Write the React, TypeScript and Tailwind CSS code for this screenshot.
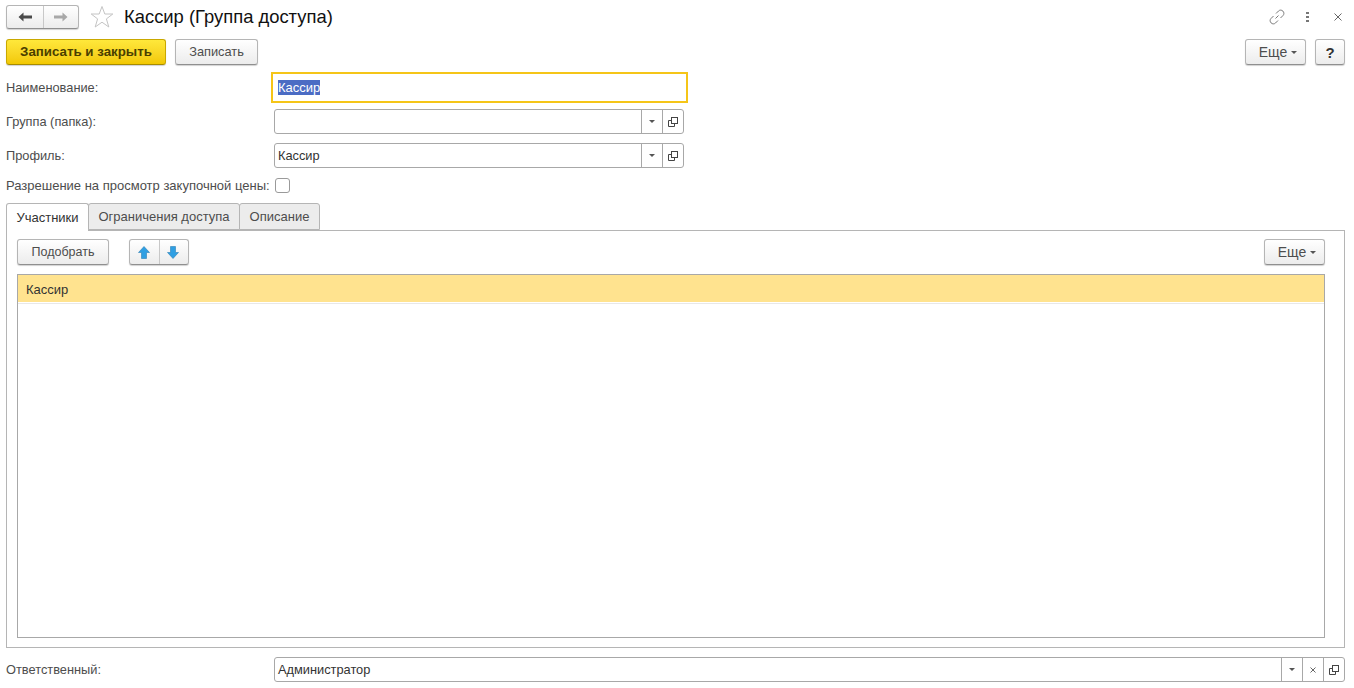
const btn = "box-border flex items-center justify-center rounded-[3px] border border-[#b5b5b5] border-b-[#8f8f8f] bg-gradient-to-b from-white to-[#ececec] text-[#4d4d4d] shadow-[0_1px_1px_rgba(0,0,0,0.18)]";

function Caret() {
  return <svg width="6" height="3" viewBox="0 0 6 3"><path d="M0 0h6L3 3z" fill="#555" /></svg>;
}

function OpenIcon() {
  return (
    <svg width="10" height="10" viewBox="0 0 10 10" fill="none" stroke="#444" strokeWidth="1">
      <rect x="3.5" y="0.5" width="6" height="6" />
      <path d="M3 3.5H0.5V9.5H6.5V7" />
    </svg>
  );
}

function Cell({ children, w = "w-[21px]" }: { children: React.ReactNode; w?: string }) {
  return <div className={`flex h-full ${w} shrink-0 items-center justify-center border-l border-[#a8a8a8]`}>{children}</div>;
}

function Field({ label, value, clear, wide }: { label: string; value?: string; clear?: boolean; wide?: boolean }) {
  return (
    <div className="flex h-[25px] items-center">
      <div className="w-[268px] shrink-0 pt-[1px] text-[#4d4d4d]">{label}</div>
      <div className={`box-border flex h-full ${wide ? "flex-1" : "w-[410px]"} items-center rounded-[3px] border border-[#a8a8a8] bg-white`}>
        <div className="flex-1 pl-[3px] pt-[1px] text-[#333]">{value}</div>
        <Cell><Caret /></Cell>
        {clear && (
          <Cell>
            <svg width="6" height="6" viewBox="0 0 6 6" stroke="#666" strokeWidth="1"><path d="M0.5 0.5L5.5 5.5M5.5 0.5L0.5 5.5" /></svg>
          </Cell>
        )}
        <Cell><OpenIcon /></Cell>
      </div>
    </div>
  );
}

function Arrow({ up }: { up?: boolean }) {
  return (
    <svg width="12" height="13" viewBox="0 0 12 13">
      <path d={up ? "M6 0.5L11.5 6.5H8.5V12.5H3.5V6.5H0.5Z" : "M6 12.5L11.5 6.5H8.5V0.5H3.5V6.5H0.5Z"} fill="#2f9fe3" stroke="#2c7fb5" strokeWidth="0.6" />
    </svg>
  );
}

function More() {
  return (
    <div className={`${btn} h-[26px] w-[61px] gap-[4px] pl-[5px]`}>
      <span className="text-[14px]">Еще</span>
      <Caret />
    </div>
  );
}

export default function App() {
  return (
    <div className="box-border flex h-[688px] w-[1354px] flex-col overflow-hidden bg-white pl-[6px] pr-[9px] pt-[5px] font-['Liberation_Sans',sans-serif] text-[12.8px] leading-none">
      {/* title bar */}
      <div className="flex h-[24px] items-center">
        <div className={`${btn} h-[24px] w-[73px]`}>
          <div className="flex h-full w-[37px] items-center justify-center border-r border-[#c8c8c8]">
            <svg width="14" height="10" viewBox="0 0 14 10"><path d="M5.5 0.5L0.5 5L5.5 9.5V6.5H14V3.5H5.5Z" fill="#4a4a4a" /></svg>
          </div>
          <div className="flex h-full flex-1 items-center justify-center">
            <svg width="14" height="10" viewBox="0 0 14 10"><path d="M8.5 0.5L13.5 5L8.5 9.5V6.5H0V3.5H8.5Z" fill="#a8a8a8" /></svg>
          </div>
        </div>
        <svg className="ml-[11px]" width="24" height="24" viewBox="0 0 24 24" fill="none" stroke="#c4c4c4" strokeWidth="1">
          <path d="M12 1.5L14.8 9H22.8L16.4 13.9L18.8 22L12 17.2L5.2 22L7.6 13.9L1.2 9H9.2Z" />
        </svg>
        <div className="ml-[10px] text-[18.4px] text-[#111]">Кассир (Группа доступа)</div>
        <div className="ml-auto flex items-center">
          <svg width="16" height="16" viewBox="0 0 16 16" fill="none" stroke="#7a7a7a" strokeWidth="1">
            <path d="M6.5 9.5L9.5 6.5M7 4.5L9.5 2C10.7 0.8 12.6 0.8 13.9 2.1C15.2 3.4 15.2 5.3 14 6.5L11.5 9M9 11.5L6.5 14C5.3 15.2 3.4 15.2 2.1 13.9C0.8 12.6 0.8 10.7 2 9.5L4.5 7" />
          </svg>
          <div className="ml-[21px] flex flex-col gap-[2px]">
            <div className="h-[2px] w-[3px] bg-[#777]" />
            <div className="h-[2px] w-[3px] bg-[#777]" />
            <div className="h-[2px] w-[3px] bg-[#777]" />
          </div>
          <svg className="ml-[25px] mr-[3px]" width="8" height="8" viewBox="0 0 8 8" stroke="#666" strokeWidth="1"><path d="M0.5 0.5L7.5 7.5M7.5 0.5L0.5 7.5" /></svg>
        </div>
      </div>

      {/* command bar */}
      <div className="mt-[10px] flex items-center">
        <div className="box-border flex h-[26px] w-[160px] items-center justify-center rounded-[3px] border border-[#c9a800] border-b-[#a88c00] bg-gradient-to-b from-[#ffe83a] to-[#f2c800] text-[13.3px] font-bold text-[#4a3f00] shadow-[0_1px_1px_rgba(0,0,0,0.18)]">Записать и закрыть</div>
        <div className={`${btn} ml-[9px] h-[26px] w-[83px]`}>Записать</div>
        <div className="ml-auto flex items-center gap-[9px]">
          <More />
          <div className={`${btn} h-[26px] w-[30px] text-[15px] font-bold text-[#333]`}>?</div>
        </div>
      </div>

      {/* name */}
      <div className="mt-[7px] flex h-[31px] items-center">
        <div className="w-[265px] shrink-0 pt-[1px] text-[#4d4d4d]">Наименование:</div>
        <div className="box-border flex h-full w-[417px] items-center border-[2px] border-[#f5c518] pl-[5px]">
          <span className="bg-[#4b6cc4] py-[1px] text-[13px] text-white">Кассир</span>
        </div>
      </div>

      <div className="flex flex-col gap-[9px] pt-[6px]">
        <Field label="Группа (папка):" />
        <Field label="Профиль:" value="Кассир" />
      </div>

      {/* checkbox */}
      <div className="mt-[10px] flex h-[15px] items-center">
        <div className="w-[269px] shrink-0 text-[13px] text-[#4d4d4d]">Разрешение на просмотр закупочной цены:</div>
        <div className="box-border h-[15px] w-[15px] rounded-[3px] border border-[#9a9a9a] bg-white" />
      </div>

      {/* tabs */}
      <div className="relative z-10 mt-[10px] flex h-[28px] items-stretch text-[13px]">
        <div className="box-border flex w-[83px] items-center justify-center rounded-t-[3px] border border-b-0 border-[#b5b5b5] bg-white pb-[1px] text-[#333]">Участники</div>
        <div className="ml-[-1px] box-border flex h-[27px] w-[152px] items-center justify-center rounded-t-[3px] border border-[#b5b5b5] bg-[#ececec] pb-[1px] text-[#4d4d4d]">Ограничения доступа</div>
        <div className="ml-[-1px] box-border flex h-[27px] w-[81px] items-center justify-center rounded-t-[3px] border border-[#b5b5b5] bg-[#ececec] pb-[1px] text-[#4d4d4d]">Описание</div>
      </div>

      {/* panel */}
      <div className="mt-[-1px] box-border flex h-[418px] flex-col border border-[#b5b5b5] pb-[9px] pl-[10px] pr-[19px] pt-[8px]">
        <div className="flex items-center">
          <div className={`${btn} h-[26px] w-[92px] text-[12.5px]`}>Подобрать</div>
          <div className={`${btn} ml-[20px] h-[26px] w-[60px]`}>
            <div className="flex h-full w-[30px] items-center justify-center border-r border-[#c8c8c8] pr-[1px]"><Arrow up /></div>
            <div className="flex h-full flex-1 items-center justify-center pr-[3px]"><Arrow /></div>
          </div>
          <div className="ml-auto"><More /></div>
        </div>
        <div className="mt-[9px] box-border flex-1 border border-[#a8a8a8] bg-white">
          <div className="flex h-[27px] items-center bg-[#ffe38f] pl-[8px] pt-[2px] text-[13px] text-[#333]">Кассир</div>
          <div className="mt-[1px] h-px bg-[#e8e8e8]" />
        </div>
      </div>

      <div className="mt-[9px]">
        <Field label="Ответственный:" value="Администратор" clear wide />
      </div>
    </div>
  );
}
